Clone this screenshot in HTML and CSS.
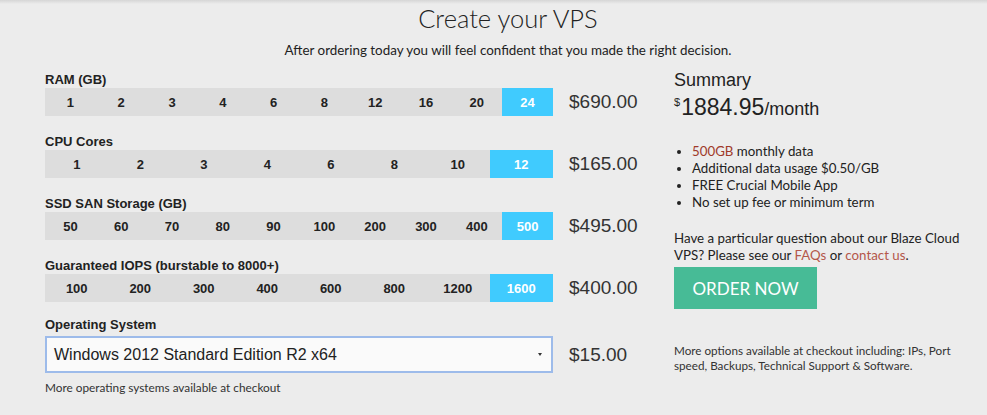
FILE: index.html
```html
<!DOCTYPE html>
<html lang="en">
<head>
<meta charset="utf-8">
<title>Create your VPS</title>
<link rel="stylesheet" href="styles.css">
</head>
<body>
<div class="page">
  <header class="head">
    <h1 class="title">Create your VPS</h1>
    <p class="subtitle">After ordering today you will feel confident that you made the right decision.</p>
  </header>
  <div class="main">
    <div class="config">
      <div class="group">
        <div class="label">RAM (GB)</div>
        <div class="row">
          <div class="bar">
            <span class="cell">1</span><span class="cell">2</span><span class="cell">3</span><span class="cell">4</span><span class="cell">6</span><span class="cell">8</span><span class="cell">12</span><span class="cell">16</span><span class="cell">20</span><span class="cell on">24</span>
          </div>
          <div class="price">$690.00</div>
        </div>
      </div>
      <div class="group">
        <div class="label">CPU Cores</div>
        <div class="row">
          <div class="bar">
            <span class="cell">1</span><span class="cell">2</span><span class="cell">3</span><span class="cell">4</span><span class="cell">6</span><span class="cell">8</span><span class="cell">10</span><span class="cell on">12</span>
          </div>
          <div class="price">$165.00</div>
        </div>
      </div>
      <div class="group">
        <div class="label">SSD SAN Storage (GB)</div>
        <div class="row">
          <div class="bar">
            <span class="cell">50</span><span class="cell">60</span><span class="cell">70</span><span class="cell">80</span><span class="cell">90</span><span class="cell">100</span><span class="cell">200</span><span class="cell">300</span><span class="cell">400</span><span class="cell on">500</span>
          </div>
          <div class="price">$495.00</div>
        </div>
      </div>
      <div class="group">
        <div class="label">Guaranteed IOPS (burstable to 8000+)</div>
        <div class="row">
          <div class="bar">
            <span class="cell">100</span><span class="cell">200</span><span class="cell">300</span><span class="cell">400</span><span class="cell">600</span><span class="cell">800</span><span class="cell">1200</span><span class="cell on">1600</span>
          </div>
          <div class="price">$400.00</div>
        </div>
      </div>
      <div class="group os">
        <div class="label os-label">Operating System</div>
        <div class="row">
          <div class="select">
            <span class="select-text">Windows 2012 Standard Edition R2 x64</span>
            <span class="caret"></span>
          </div>
          <div class="price">$15.00</div>
        </div>
        <p class="note">More operating systems available at checkout</p>
      </div>
    </div>
    <aside class="summary">
      <h2 class="sum-title">Summary</h2>
      <div class="total"><span class="cur">$</span><span class="amount">1884.95</span><span class="per">/month</span></div>
      <ul class="feats">
        <li><span class="hl">500GB</span> monthly data</li>
        <li>Additional data usage $0.50/GB</li>
        <li>FREE Crucial Mobile App</li>
        <li>No set up fee or minimum term</li>
      </ul>
      <p class="question">Have a particular question about our Blaze Cloud VPS? Please see our <a class="lnk" href="#">FAQs</a> or <a class="lnk" href="#">contact us</a>.</p>
      <a class="order" href="#">ORDER NOW</a>
      <p class="more">More options available at checkout including: IPs, Port speed, Backups, Technical Support &amp; Software.</p>
    </aside>
  </div>
</div>
</body>
</html>
```
FILE: styles.css
```css
* { box-sizing: border-box; }
html, body { margin: 0; padding: 0; }
body {
  background: #ececec linear-gradient(#d6d6d6, #ececec 4px) no-repeat;
  color: #222;
  font-family: "Lato", "Open Sans", sans-serif;
  height: 415px;
  overflow: hidden;
}
.page {
  margin-left: 45px;
  width: 926px;
}
.head { text-align: center; padding-top: 1px; }
.title {
  margin: 0;
  font-size: 25.5px;
  font-weight: 300;
  line-height: 34px;
  color: #222;
}
.subtitle {
  margin: 6px 0 0;
  font-size: 13.4px;
  line-height: 18px;
  color: #222;
}
.main {
  display: flex;
  margin-top: 13px;
}
.config { width: 629px; }
.group { margin-bottom: 18px; }
.group.os { margin-top: -3px; }
.label {
  font-family: "Liberation Sans", Arial, sans-serif;
  font-weight: bold;
  font-size: 13px;
  line-height: 15px;
  color: #222;
  margin-bottom: 1px;
}
.row { display: flex; align-items: center; }
.bar {
  display: flex;
  width: 508px;
  height: 28px;
  background: #dddddd;
}
.cell {
  flex: 1 1 0;
  display: flex;
  align-items: center;
  justify-content: center;
  font-family: "Liberation Sans", Arial, sans-serif;
  font-weight: bold;
  font-size: 13px;
  color: #222;
}
.cell.on { background: #40cbfe; color: #fff; }
.price {
  margin-left: 16px;
  font-family: "Liberation Sans", Arial, sans-serif;
  font-size: 19px;
  color: #333;
}
.os-label { margin-bottom: 4px; }
.select {
  display: flex;
  align-items: center;
  width: 508px;
  height: 37px;
  padding: 0 9px 0 7px;
  background: #fafafa;
  border: 2px solid #9dbbea;
}
.select-text {
  font-family: "Liberation Sans", Arial, sans-serif;
  font-size: 16px;
  color: #222;
}
.caret {
  margin-left: auto;
  width: 0;
  height: 0;
  border-left: 2.5px solid transparent;
  border-right: 2.5px solid transparent;
  border-top: 3px solid #333;
}
.note {
  margin: 8px 0 0;
  font-size: 11.8px;
  line-height: 14px;
  color: #333;
}
.summary { margin-top: -3px; width: 297px; }
.sum-title {
  margin: 0;
  font-family: "Liberation Sans", Arial, sans-serif;
  font-weight: normal;
  font-size: 18px;
  line-height: 22px;
  color: #222;
}
.total {
  margin-top: 0;
  font-family: "Liberation Sans", Arial, sans-serif;
  color: #222;
  line-height: 18px;
  padding-top: 2px;
}
.cur { font-size: 11px; vertical-align: 9px; margin-right: 1px; }
.amount { font-size: 23px; }
.per { font-size: 18px; }
.feats {
  margin: 24px 0 0;
  padding-left: 18px;
  font-size: 13.3px;
  line-height: 17px;
}
.hl { color: #a03a2a; }
.question {
  margin: 19px 0 0;
  font-size: 13.3px;
  line-height: 17px;
}
.lnk { color: #b4574a; text-decoration: none; }
.order {
  display: flex;
  align-items: center;
  justify-content: center;
  width: 143px;
  height: 42px;
  margin-top: 3px;
  background: #47bb96;
  color: #fff;
  font-size: 17px;
  text-decoration: none;
}
.more {
  margin: 34px 0 0;
  font-size: 11.7px;
  line-height: 15px;
  color: #333;
}
```
